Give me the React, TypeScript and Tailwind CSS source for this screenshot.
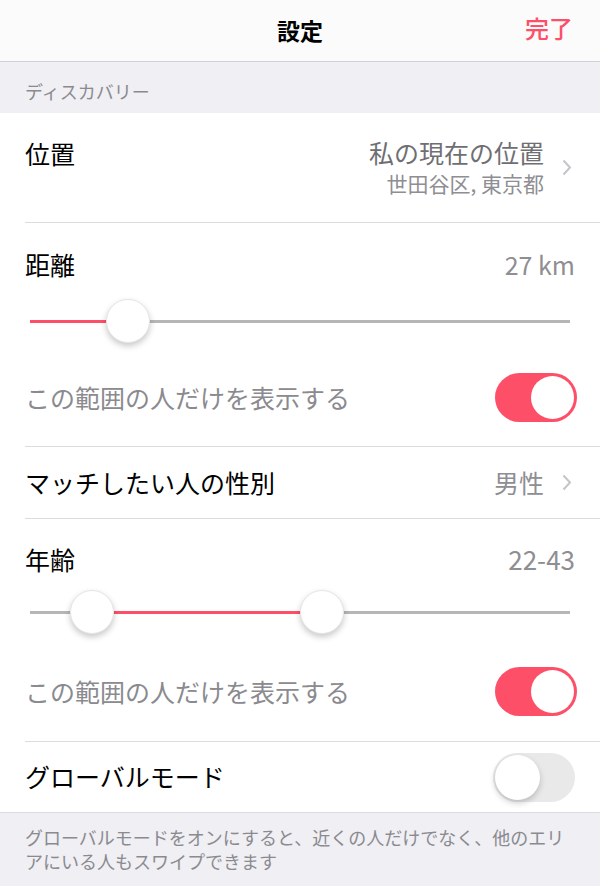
const RED = "#fd5068";

const Chevron = () => (
  <svg width="10" height="17" viewBox="0 0 10 17" className="ml-[18px] shrink-0">
    <path d="M1.5 1.5 L8 8.5 L1.5 15.5" fill="none" stroke="#c4c4c9" strokeWidth="2" />
  </svg>
);

const Toggle = ({ on }: { on: boolean }) =>
  on ? (
    <div className="w-[82px] h-[49px] rounded-full bg-[#fd5068] p-[3px] flex justify-end">
      <div className="w-[43px] h-[43px] rounded-full bg-white" />
    </div>
  ) : (
    <div className="w-[82px] h-[49px] rounded-full bg-[#e9e9ea] p-[2px] flex justify-start">
      <div className="w-[45px] h-[45px] rounded-full bg-white shadow-[0_3px_6px_rgba(0,0,0,0.2)]" />
    </div>
  );

const Thumb = ({ x }: { x: number }) => (
  <div
    className="absolute top-1/2 w-[44px] h-[44px] -mt-[22px] -ml-[22px] rounded-full bg-white border border-[#e6e6e6] shadow-[0_3px_6px_rgba(0,0,0,0.22)]"
    style={{ left: x }}
  />
);

// track spans 540px (x 30..570)
const Slider = ({ from, to }: { from: number; to: number }) => (
  <div className="relative h-[44px] mx-[30px]">
    <div className="absolute left-0 right-0 top-1/2 -mt-[1.5px] h-[3px] bg-[#b6b6b6]" />
    <div
      className="absolute top-1/2 -mt-[1.5px] h-[3px]"
      style={{ left: from, width: to - from, background: RED }}
    />
    {from > 0 && <Thumb x={from} />}
    <Thumb x={to} />
  </div>
);

const Divider = () => <div className="ml-[25px] h-px bg-[#dcdce0]" />;

export default function App() {
  return (
    <div
      className="w-[600px] h-[886px] bg-[#efeff4] overflow-hidden text-black"
      style={{ fontFamily: '"Noto Sans CJK JP", "Noto Sans", sans-serif' }}
    >
      {/* nav bar */}
      <div className="relative h-[62px] bg-[#fbfbfb] border-b border-[#d2d2d6] flex items-center justify-center">
        <span className="text-[23px] font-bold leading-none">設定</span>
        <span className="absolute right-[27px] top-[16px] text-[24px] font-medium leading-none" style={{ color: RED }}>
          完了
        </span>
      </div>

      {/* section header */}
      <div className="h-[51px] flex items-end pb-[9px] px-[25px] text-[18px] leading-[26px] text-[#8a8a8f]">
        ディスカバリー
      </div>

      <div className="bg-white">
        {/* location */}
        <div className="h-[109px] flex items-start justify-between pl-[25px] pr-[28px] pt-[25px]">
          <div className="text-[25px] leading-[30px]">位置</div>
          <div className="flex items-center">
            <div className="flex flex-col items-end">
              <div className="text-[25px] leading-[28px] text-[#6f6f73]">私の現在の位置</div>
              <div className="mt-[4px] text-[21px] leading-[26px] text-[#8e8e93]">世田谷区, 東京都</div>
            </div>
            <Chevron />
          </div>
        </div>
        <Divider />

        {/* distance */}
        <div className="h-[223px] pt-[26px]">
          <div className="flex justify-between pl-[25px] pr-[25px] leading-[30px]">
            <span className="text-[25px]">距離</span>
            <span className="text-[25px] text-[#8e8e93]">27 km</span>
          </div>
          <div className="mt-[20px]">
            <Slider from={0} to={98} />
          </div>
          <div className="mt-[30px] flex items-center justify-between pl-[25px] pr-[23px]">
            <span className="text-[25px] text-[#8a8a8f]">この範囲の人だけを表示する</span>
            <Toggle on />
          </div>
        </div>
        <Divider />

        {/* gender */}
        <div className="h-[71px] flex items-center justify-between pl-[25px] pr-[28px]">
          <span className="text-[25px]">マッチしたい人の性別</span>
          <div className="flex items-center">
            <span className="text-[25px] text-[#8e8e93]">男性</span>
            <Chevron />
          </div>
        </div>
        <Divider />

        {/* age */}
        <div className="h-[222px] pt-[25px]">
          <div className="flex justify-between pl-[25px] pr-[25px] leading-[30px]">
            <span className="text-[25px]">年齢</span>
            <span className="text-[26px] text-[#8e8e93]">22-43</span>
          </div>
          <div className="mt-[16px]">
            <Slider from={62} to={292} />
          </div>
          <div className="mt-[33px] flex items-center justify-between pl-[25px] pr-[23px]">
            <span className="text-[25px] text-[#8a8a8f]">この範囲の人だけを表示する</span>
            <Toggle on />
          </div>
        </div>
        <Divider />

        {/* global */}
        <div className="h-[70px] flex items-center justify-between pl-[25px] pr-[25px]">
          <span className="text-[25px]">グローバルモード</span>
          <Toggle on={false} />
        </div>
      </div>
      <div className="h-px bg-[#dcdce0]" />

      {/* footer */}
      <div className="px-[25px] pt-[12px] text-[18px] leading-[24px] text-[#8a8a8f]">
        グローバルモードをオンにすると、近くの人だけでなく、他のエリアにいる人もスワイプできます
      </div>
    </div>
  );
}
